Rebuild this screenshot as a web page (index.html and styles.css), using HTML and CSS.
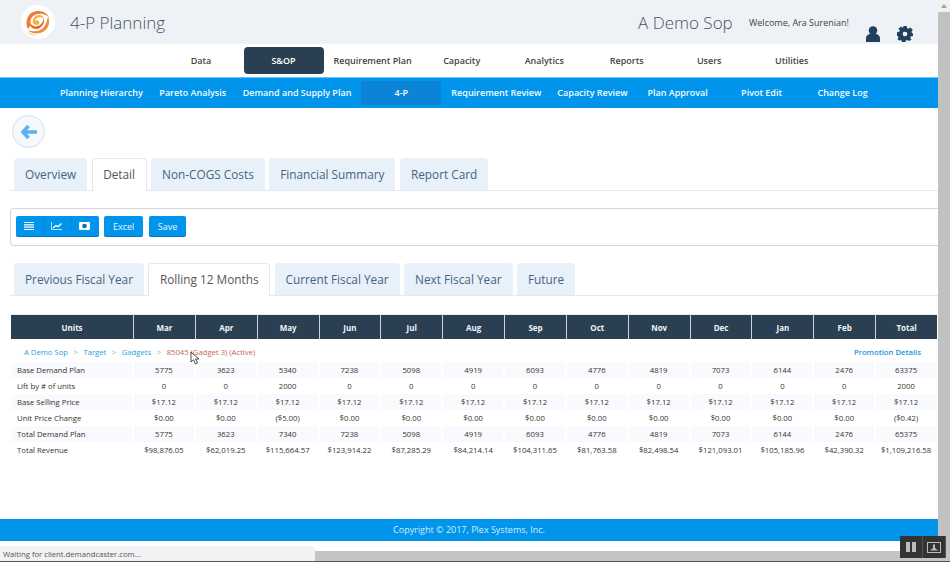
FILE: index.html
```html
<!DOCTYPE html>
<html lang="en">
<head>
<meta charset="utf-8">
<title>4-P Planning</title>
<link rel="stylesheet" href="styles.css">
</head>
<body>
<div class="shell">
  <div class="top">
    <div class="page">
      <header class="head">
        <div class="logo">
          <svg viewBox="0 0 34 34" width="34" height="34"><circle cx="17" cy="17" r="17" fill="#fff"/><path d="M7 24C3 15 8 6 17 6c6 0 9 3 11 6-3-2-7-4-11-3-6 1-9 6-7 11z" fill="#ee7b30"/><path d="M27 11c3 7 0 15-8 17-5 1-10 0-12-3 5 2 11 2 15-2 3-3 4-7 5-12z" fill="#ef8f3a"/><path d="M23 13c1 6-3 11-8 11-4 0-6-3-6-6 2 3 5 4 8 3 3-1 5-4 6-8z" fill="#e9622a"/><path d="M12 18c-1-4 2-8 6-8 3 0 5 2 5 4-2-2-5-2-7-1-1 1-2 2-2 3 1-1 3-1 4 0 1 2 0 4-2 4s-3-1-4-2z" fill="#f6b13d"/><path d="M6 27c3 2 6 3 10 3-4 1-8 0-10-3z" fill="#f9c56b"/></svg>
        </div>
        <div class="app">4-P Planning</div>
        <div class="org">A Demo Sop</div>
        <div class="welcome">Welcome, Ara Surenian!</div>
        <svg class="user" viewBox="0 0 14 16" width="14" height="16"><circle cx="7" cy="4.500" r="4.300" fill="#22405c"/><path d="M0 16v-3.500C0 9.500 2.500 8 4 8h6c1.500 0 4 1.500 4 4.500V16z" fill="#22405c"/></svg>
        <svg class="gear" viewBox="0 0 24 24" width="16" height="16"><path fill="#22405c" fill-rule="evenodd" d="M9.500 0h5l.7 3.400 2 .8L20 2.300 23.700 6l-1.900 2.800.8 2 3.400.7v0H24v3.500l-3.400.7-.8 2 1.900 2.800-3.700 2-2.800-1.400-2 .8-.7 3.100h-5l-.7-3.100-2-.8L3.900 22l-3.200-2 1.500-2.800-.8-2L0 14.500v-5l3.400-.7.800-2L2.300 4 6 .6l2.800 2 .7-.2zM12 8.500a3.500 3.500 0 1 0 0 7 3.500 3.500 0 0 0 0-7z"/></svg>
      </header>
      <nav class="mainnav">
        <a class="mi">Data</a>
        <a class="mi on">S&amp;OP</a>
        <a class="mi">Requirement Plan</a>
        <a class="mi">Capacity</a>
        <a class="mi">Analytics</a>
        <a class="mi">Reports</a>
        <a class="mi">Users</a>
        <a class="mi">Utilities</a>
      </nav>
      <nav class="subnav">
        <a class="si">Planning Hierarchy</a>
        <a class="si">Pareto Analysis</a>
        <a class="si">Demand and Supply Plan</a>
        <a class="si on">4-P</a>
        <a class="si">Requirement Review</a>
        <a class="si">Capacity Review</a>
        <a class="si">Plan Approval</a>
        <a class="si">Pivot Edit</a>
        <a class="si">Change Log</a>
      </nav>
      <div class="backrow">
        <div class="back"><svg viewBox="0 0 16 14" width="16" height="14"><path d="M7.500 1 2 7l5.500 6M3 7h13" fill="none" stroke="#58b4f1" stroke-width="3.600"/></svg></div>
      </div>
      <div class="tabs first">
        <a class="tab">Overview</a>
        <a class="tab on">Detail</a>
        <a class="tab">Non-COGS Costs</a>
        <a class="tab">Financial Summary</a>
        <a class="tab">Report Card</a>
      </div>
      <div class="toolbar">
        <div class="group">
          <a class="tb"><svg viewBox="0 0 10 8" width="10" height="8"><path d="M0 .5h10M0 2.800h10M0 5.200h10M0 7.500h10" stroke="#fff" stroke-width="1.200"/></svg></a>
          <a class="tb"><svg viewBox="0 0 11 8" width="11" height="8"><path d="M.5 0v7.500H11" fill="none" stroke="#e4f4ff" stroke-width=".8"/><path d="M2 6l3-2.500 2 1.200L10.500 1.500" fill="none" stroke="#fff" stroke-width="1.400"/></svg></a>
          <a class="tb"><svg viewBox="0 0 11 8" width="11" height="8"><rect width="11" height="8" rx="1" fill="#fff"/><circle cx="5.500" cy="4" r="2.300" fill="#0a6fb5"/></svg></a>
        </div>
        <a class="btn">Excel</a>
        <a class="btn">Save</a>
      </div>
      <div class="tabs second">
        <a class="tab">Previous Fiscal Year</a>
        <a class="tab on">Rolling 12 Months</a>
        <a class="tab">Current Fiscal Year</a>
        <a class="tab">Next Fiscal Year</a>
        <a class="tab">Future</a>
      </div>
      <table class="grid">
        <thead>
          <tr><th>Units</th><th>Mar</th><th>Apr</th><th>May</th><th>Jun</th><th>Jul</th><th>Aug</th><th>Sep</th><th>Oct</th><th>Nov</th><th>Dec</th><th>Jan</th><th>Feb</th><th>Total</th></tr>
        </thead>
        <tbody>
          <tr class="crumbrow"><td colspan="14"><div class="crumbs"><span class="path">A Demo Sop<i>&gt;</i>Target<i>&gt;</i>Gadgets<i>&gt;</i></span><span class="item">85045 (Gadget 3) (Active)</span><span class="promo">Promotion Details</span></div></td></tr>
          <tr class="alt"><td>Base Demand Plan</td><td>5775</td><td>3623</td><td>5340</td><td>7238</td><td>5098</td><td>4919</td><td>6093</td><td>4776</td><td>4819</td><td>7073</td><td>6144</td><td>2476</td><td>63375</td></tr>
          <tr><td>Lift by # of units</td><td>0</td><td>0</td><td>2000</td><td>0</td><td>0</td><td>0</td><td>0</td><td>0</td><td>0</td><td>0</td><td>0</td><td>0</td><td>2000</td></tr>
          <tr class="alt"><td>Base Selling Price</td><td>$17.12</td><td>$17.12</td><td>$17.12</td><td>$17.12</td><td>$17.12</td><td>$17.12</td><td>$17.12</td><td>$17.12</td><td>$17.12</td><td>$17.12</td><td>$17.12</td><td>$17.12</td><td>$17.12</td></tr>
          <tr><td>Unit Price Change</td><td>$0.00</td><td>$0.00</td><td>($5.00)</td><td>$0.00</td><td>$0.00</td><td>$0.00</td><td>$0.00</td><td>$0.00</td><td>$0.00</td><td>$0.00</td><td>$0.00</td><td>$0.00</td><td>($0.42)</td></tr>
          <tr class="alt"><td>Total Demand Plan</td><td>5775</td><td>3623</td><td>7340</td><td>7238</td><td>5098</td><td>4919</td><td>6093</td><td>4776</td><td>4819</td><td>7073</td><td>6144</td><td>2476</td><td>65375</td></tr>
          <tr><td>Total Revenue</td><td>$98,876.05</td><td>$62,019.25</td><td>$115,664.57</td><td>$123,914.22</td><td>$87,285.29</td><td>$84,214.14</td><td>$104,311.65</td><td>$81,763.58</td><td>$82,498.54</td><td>$121,093.01</td><td>$105,185.96</td><td>$42,390.32</td><td>$1,109,216.58</td></tr>
        </tbody>
      </table>
      <footer class="foot">Copyright © 2017, Plex Systems, Inc.</footer>
    </div>
    <div class="vscroll"><span class="arrow"></span><span class="thumb"></span></div>
  </div>
  <div class="hscroll"></div>
  <div class="edge"></div>
  <div class="status">Waiting for client.demandcaster.com...</div>
  <div class="player">
    <span class="pbtn"><svg viewBox="0 0 12 12" width="12" height="12"><path d="M1 1h4v10H1zM7 1h4v10H7z" fill="#bdbdbd"/></svg></span>
    <span class="pbtn"><svg viewBox="0 0 14 11" width="14" height="11"><rect x=".5" y=".5" width="13" height="10" fill="none" stroke="#bdbdbd"/><path d="M6 2.500h2V6l3 2.500H3L6 6z" fill="#bdbdbd"/></svg></span>
  </div>
  <svg class="cursor" viewBox="0 0 11 14" width="11" height="14"><path d="M1 1v10l2.500-2.300L5.500 13l2-1-2-4H9z" fill="#fff" stroke="#222" stroke-width=".8"/></svg>
</div>
</body>
</html>
```
FILE: styles.css
```css
* { box-sizing: border-box; }
html, body { margin: 0; padding: 0; height: 562px; overflow: hidden; background: #fff; }
body { font-family: "Open Sans", "Liberation Sans", sans-serif; color: #333; }
a { color: inherit; text-decoration: none; }
.shell { position: relative; width: 950px; height: 562px; display: flex; flex-direction: column; overflow: hidden; }
.top { display: flex; height: 551px; }
.page { width: 938px; height: 551px; display: flex; flex-direction: column; }

.head { height: 44px; background: #eef1f5; display: flex; align-items: flex-start; flex: none; }
.logo { margin: 5px 0 0 21px; width: 34px; height: 34px; }
.app { margin: 11px 0 0 15px; font-size: 17px; line-height: 24px; font-weight: 300; color: #46535f; width: 200px; }
.org { margin: 11px 0 0 368px; font-size: 17px; line-height: 24px; font-weight: 300; color: #46535f; width: 111px; }
.welcome { font-size: 9px; line-height: 14px; margin-top: 16px; color: #444; width: 117px; white-space: nowrap; }
.user { margin-top: 26px; }
.gear { margin: 26px 0 0 17px; }

.mainnav { height: 33px; padding: 3px 0 0 161px; display: flex; gap: 2.500px; flex: none; background: #fff; }
.mi { min-width: 80px; height: 27px; line-height: 27px; text-align: center; font-size: 9px; font-weight: 600; color: #444; padding: 0 7.500px; border-radius: 4px; }
.mi.on { background: #2b3f52; color: #fff; }

.subnav { height: 31px; background: #0095eb; border-top: 1px solid #6cc4f5; padding: 3px 0 0 54px; display: flex; gap: 4px; flex: none; }
.si { min-width: 80px; height: 24px; line-height: 24px; padding: 0 6px; text-align: center; font-size: 9px; font-weight: 600; color: #f4fbff; white-space: nowrap; }
.si:last-child { margin-left: -3px; }
.si.on { background: #0b84d8; }

.backrow { padding: 7px 0 0 12px; height: 50px; flex: none; }
.back { width: 33px; height: 33px; border-radius: 50%; background: #f6f9fc; border: 1px solid #cfe0ee; display: flex; align-items: center; justify-content: center; }

.tabs { margin-left: 10px; padding-left: 4px; display: flex; gap: 4.500px; height: 33px; border-bottom: 1px solid #e4e9ef; flex: none; }
.tab { height: 32px; line-height: 32px; padding: 0 11px; font-size: 11.800px; color: #45647e; background: #e8f1f9; border-radius: 4px 4px 0 0; white-space: nowrap; }
.tab.on { background: #fff; color: #555; border: 1px solid #e4e6e9; border-bottom: 0; line-height: 31px; padding: 0 10.500px; height: 33px; }
.second { margin-top: 17px; }

.toolbar { margin: 17px 0 0 10px; height: 38px; width: 928px; border: 1px solid #d8d8d8; border-right: 0; border-radius: 4px 0 0 4px; padding: 7px 0 0 5px; display: flex; gap: 5.500px; flex: none; }
.group { display: flex; height: 21px; }
.tb { width: 27.500px; height: 21px; background: #0095eb; border-bottom: 1px solid #0a76bd; border-right: 1px solid #0a84d0; display: flex; align-items: center; justify-content: center; }
.tb:first-child { border-radius: 2px 0 0 2px; }
.tb:last-child { border-right: 0; border-radius: 0 2px 2px 0; }
.btn { height: 21px; line-height: 21px; padding: 0 9px; background: #0095eb; border-bottom: 1px solid #0a76bd; border-radius: 2px; color: #e8f6ff; font-size: 9px; }

.grid { margin: 18px 0 0 11px; width: 926px; border-collapse: separate; border-spacing: 0; table-layout: fixed; flex: none; }
.grid th { height: 25px; background: #2b3f52; color: #f0f3f6; font-size: 8px; font-weight: 700; text-align: center; padding: 0; border-left: 1px solid #cdd4da; border-top: 1px solid #e6eef5; }
.grid th:first-child { width: 122px; border-left: 0; }
.grid td { height: 16px; padding: 0; font-size: 7.750px; line-height: 14px; text-align: center; color: #333; border-left: 1px solid #fff; border-right: 1px solid #fff; white-space: nowrap; }
.grid td:first-child { text-align: left; padding-left: 5px; }
.grid .alt td { background: #f8fafd; }
.grid .crumbrow td { height: 23px; padding: 2px 0 0 0; text-align: left; border: 0; }
.crumbs { display: flex; padding: 0 16px 0 13px; font-size: 7.700px; }
.path { color: #2b9fe0; }
.path i { font-style: normal; color: #9ab; margin: 0 5.500px; }
.item { color: #c4694a; }
.promo { color: #1b95df; margin-left: auto; font-weight: 600; }

.foot { margin-top: auto; margin-bottom: 10px; height: 22px; line-height: 22px; background: #0095eb; color: #cfeeff; text-align: center; font-size: 9px; flex: none; }

.vscroll { width: 12px; height: 551px; background: #f1f1f1; display: flex; flex-direction: column; }
.arrow { height: 12px; flex: none; position: relative; }
.arrow::after { content: ""; position: absolute; left: 3px; top: 4px; border: 3px solid transparent; border-top: 0; border-bottom: 4px solid #a3a3a3; }
.thumb { flex: 1; background: #c1c1c1; }
.hscroll { height: 10px; background: #c4c4c4; flex: none; }
.edge { height: 1px; background: #555; flex: none; }

.status { position: absolute; left: 0; top: 546px; width: 315px; height: 15px; background: #f1f2f4; border-radius: 0 4px 0 0; font-size: 7.700px; line-height: 17px; padding-left: 3px; color: #555; }
.player { position: absolute; left: 900px; top: 536px; width: 46px; height: 22px; background: #333; display: flex; }
.pbtn { width: 23px; display: flex; align-items: center; justify-content: center; border-right: 1px solid #555; }
.cursor { position: absolute; left: 190px; top: 351px; }
```
